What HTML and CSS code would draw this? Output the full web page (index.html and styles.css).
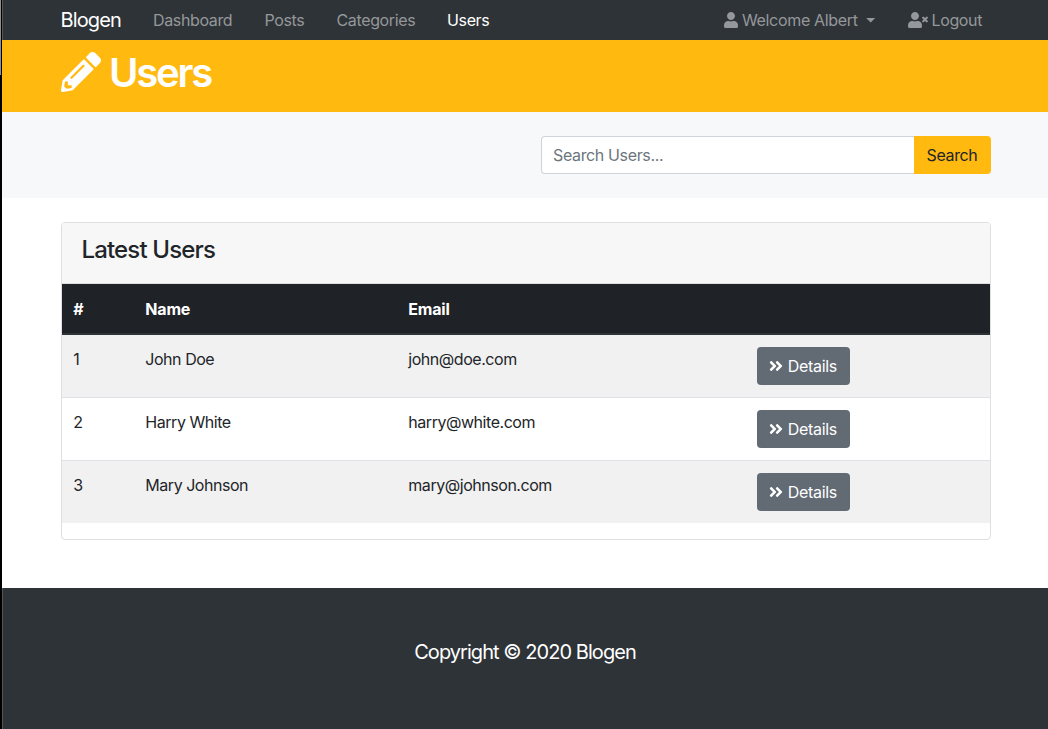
FILE: index.html
```html
<!DOCTYPE html>
<html lang="en">
<head>
<meta charset="utf-8">
<title>Blogen - Users</title>
<link rel="stylesheet" href="styles.css">
</head>
<body>
<svg class="defs" aria-hidden="true">
  <symbol id="user" viewBox="0 0 448 512"><path d="M224 256c70.7 0 128-57.3 128-128S294.7 0 224 0 96 57.3 96 128s57.3 128 128 128zm89.6 32h-16.7c-22.2 10.2-46.9 16-72.9 16s-50.6-5.8-72.9-16h-16.7C60.2 288 0 348.2 0 422.4V464c0 26.5 21.5 48 48 48h352c26.5 0 48-21.5 48-48v-41.6c0-74.2-60.2-134.4-134.4-134.4z"/></symbol>
  <symbol id="user-times" viewBox="0 0 640 512"><path d="M589.6 240l45.6-45.6c6.3-6.3 6.3-16.5 0-22.8l-22.8-22.8c-6.3-6.3-16.5-6.3-22.8 0L544 194.4l-45.6-45.6c-6.3-6.3-16.5-6.3-22.8 0l-22.8 22.8c-6.3 6.3-6.3 16.5 0 22.8l45.6 45.6-45.6 45.6c-6.3 6.3-6.3 16.5 0 22.8l22.8 22.8c6.3 6.3 16.5 6.3 22.8 0l45.6-45.6 45.6 45.6c6.3 6.3 16.5 6.3 22.8 0l22.8-22.8c6.3-6.3 6.3-16.5 0-22.8L589.6 240z"/><path d="M224 256c70.7 0 128-57.3 128-128S294.7 0 224 0 96 57.3 96 128s57.3 128 128 128zm89.6 32h-16.7c-22.2 10.2-46.9 16-72.9 16s-50.6-5.8-72.9-16h-16.7C60.2 288 0 348.2 0 422.4V464c0 26.5 21.5 48 48 48h352c26.5 0 48-21.5 48-48v-41.6c0-74.2-60.2-134.4-134.4-134.4z"/></symbol>
  <symbol id="pencil" viewBox="0 0 512 512"><path d="M497.9 142.1l-46.1 46.1c-4.7 4.7-12.3 4.7-17 0l-111-111c-4.7-4.7-4.7-12.3 0-17l46.1-46.1c18.7-18.7 49.1-18.7 67.9 0l60.1 60.1c18.8 18.7 18.8 49.1 0 67.9zM284.2 99.8L21.6 362.4.4 483.9c-2.9 16.4 11.4 30.6 27.8 27.8l121.5-21.3 262.6-262.6c4.7-4.7 4.7-12.3 0-17l-111-111c-4.8-4.7-12.4-4.7-17.1 0zM124.1 339.9c-5.5-5.5-5.5-14.3 0-19.8l154-154c5.5-5.5 14.3-5.5 19.8 0s5.5 14.3 0 19.8l-154 154c-5.5 5.5-14.3 5.5-19.8 0zM88 424h48v36.3l-64.5 11.3-31.1-31.1L51.7 376H88v48z"/></symbol>
  <symbol id="angles" viewBox="0 0 448 512"><path d="M224.3 273l-136 136c-9.4 9.4-24.6 9.4-33.9 0l-22.6-22.6c-9.4-9.4-9.4-24.6 0-33.9l96.4-96.4-96.4-96.4c-9.4-9.4-9.4-24.6 0-33.9L54.3 103c9.4-9.4 24.6-9.4 33.9 0l136 136c9.5 9.4 9.5 24.6.1 34zm192-34l-136-136c-9.4-9.4-24.6-9.4-33.9 0l-22.6 22.6c-9.4 9.4-9.4 24.6 0 33.9l96.4 96.4-96.4 96.4c-9.4 9.4-9.4 24.6 0 33.9l22.6 22.6c9.4 9.4 24.6 9.4 33.9 0l136-136c9.4-9.2 9.4-24.4 0-33.8z"/></symbol>
</svg>
<div class="page">
  <nav class="navbar">
    <div class="container navbar-inner">
      <a class="brand">Blogen</a>
      <a class="nav-link dashboard">Dashboard</a>
      <a class="nav-link posts">Posts</a>
      <a class="nav-link categories">Categories</a>
      <a class="nav-link active">Users</a>
      <a class="nav-link account"><svg class="icon-user"><use href="#user"/></svg><span>Welcome Albert</span><i class="caret"></i></a>
      <a class="nav-link logout"><svg class="icon-logout"><use href="#user-times"/></svg><span>Logout</span></a>
    </div>
  </nav>
  <header class="header">
    <div class="container">
      <h1 class="title"><svg class="icon-pencil"><use href="#pencil"/></svg><span class="title-text">Users</span></h1>
    </div>
  </header>
  <section class="search">
    <div class="container search-inner">
      <input class="search-input" type="text" placeholder="Search Users...">
      <button class="search-button">Search</button>
    </div>
  </section>
  <main class="container">
    <div class="card">
      <h4 class="card-header">Latest Users</h4>
      <table class="table">
        <colgroup><col class="col-id"><col class="col-name"><col class="col-email"><col></colgroup>
        <thead><tr><th>#</th><th>Name</th><th>Email</th><th></th></tr></thead>
        <tbody>
          <tr><td>1</td><td>John Doe</td><td>john@doe.com</td><td><a class="details"><svg class="icon-angles"><use href="#angles"/></svg><span>Details</span></a></td></tr>
          <tr><td>2</td><td>Harry White</td><td>harry@white.com</td><td><a class="details"><svg class="icon-angles"><use href="#angles"/></svg><span>Details</span></a></td></tr>
          <tr><td>3</td><td>Mary Johnson</td><td>mary@johnson.com</td><td><a class="details"><svg class="icon-angles"><use href="#angles"/></svg><span>Details</span></a></td></tr>
        </tbody>
      </table>
    </div>
  </main>
  <footer class="footer"><p class="copyright">Copyright © 2020 Blogen</p></footer>
</div>
</body>
</html>
```

FILE: styles.css
```css
* { box-sizing: border-box; }
html { overflow: hidden; }
body {
  margin: 0;
  height: 729px;
  overflow: hidden;
  padding-left: 2px;
  background: linear-gradient(#8f8f8f, #8f8f8f) 0 0 / 1px 75px no-repeat, #000;
  color: #212529;
  font: 16px/24px Inter, "Liberation Sans", sans-serif;
  letter-spacing: -0.36px;
}
svg { display: block; flex: none; fill: currentColor; }
.defs { display: none; }
.page { width: 1048px; height: 729px; display: flex; flex-direction: column; background: #fff; }
.container { width: 930px; margin-left: 59px; }

.navbar { height: 40px; background: #2e3338; border-left: 1px solid #53575b; }
.navbar .container { margin-left: 57.5px; }
.navbar-inner { display: flex; align-items: center; height: 40px; white-space: nowrap; }
.brand { width: 92.5px; color: #fff; font-size: 20px; letter-spacing: -0.85px; }
.nav-link { display: flex; align-items: center; color: #95989a; }
.nav-link.active { color: #fff; }
.dashboard { width: 111.5px; }
.posts { width: 72px; }
.categories { width: 110.5px; }
.account { width: 184px; margin-left: auto; letter-spacing: -0.32px; }
.logout { width: 83px; }
.icon-user { width: 14px; height: 16px; margin-right: 4.4px; }
.icon-logout { width: 20px; height: 16px; margin-right: 4px; }
.caret {
  width: 10px;
  height: 5px;
  margin-left: 8px;
  background: currentColor;
  clip-path: polygon(0 0, 100% 0, 50% 100%);
}

.header { height: 72px; background: #ffb90f; color: #fff; }
.title {
  display: flex;
  align-items: flex-start;
  margin: 0;
  padding-top: 9px;
  font-size: 40px;
  line-height: 48px;
  font-weight: 600;
  letter-spacing: -2.2px;
}
.icon-pencil { width: 40px; height: 40px; margin: 3px 8.5px 0 -0.5px; }

.search { height: 86px; padding-top: 24px; background: #f7f8fa; }
.search-inner { display: flex; justify-content: flex-end; }
.search-input {
  width: 373px;
  height: 38px;
  padding: 0 11px;
  border: 1px solid #ced4da;
  border-right: 0;
  border-radius: 4px 0 0 4px;
  background: #fff;
  font: inherit;
  letter-spacing: inherit;
}
.search-input::placeholder { color: #6c757d; opacity: 1; }
.search-button {
  width: 77px;
  height: 38px;
  padding: 0 1px 0 0;
  border: 0;
  border-radius: 0 4px 4px 0;
  background: #ffb90f;
  color: #212529;
  font: inherit;
  letter-spacing: inherit;
}

.card { height: 318px; margin-top: 24px; border: 1px solid #dfdfdf; border-radius: 4px; }
.card-header {
  height: 61px;
  margin: 0;
  padding: 12px 19.5px;
  border-bottom: 1px solid #dfdfdf;
  border-radius: 3px 3px 0 0;
  background: #f7f7f7;
  font-size: 24px;
  line-height: 30px;
  font-weight: 500;
  letter-spacing: -0.85px;
}
.table { width: 100%; table-layout: fixed; border-collapse: separate; border-spacing: 0; letter-spacing: -0.46px; }
.col-id { width: 72px; }
.col-name { width: 263px; }
.col-email { width: 349px; }
th, td { padding: 12px 11.3px; text-align: left; vertical-align: top; }
th { height: 51px; padding-top: 13px; background: #1f2328; border-bottom: 2px solid #2e3338; color: #fff; font-weight: 700; letter-spacing: -0.2px; }
td { height: 63px; border-top: 1px solid #dee2e6; }
tbody tr:first-child td { height: 62px; border-top: 0; }
tbody tr:nth-child(odd) { background: #f1f1f1; }
.details {
  display: flex;
  align-items: center;
  width: 93px;
  height: 38px;
  padding-left: 12px;
  border-radius: 4px;
  background: #626a73;
  color: #fff;
  letter-spacing: -0.32px;
}
.icon-angles { width: 14px; height: 16px; margin-right: 4.5px; }

.footer { height: 141px; margin-top: auto; border-left: 1px solid #53575b; background: #2e3338; color: #fff; text-align: center; }
.copyright { margin: 0; padding: 48px 3px 0 0; font-size: 20px; line-height: 32px; letter-spacing: -0.95px; }
```
